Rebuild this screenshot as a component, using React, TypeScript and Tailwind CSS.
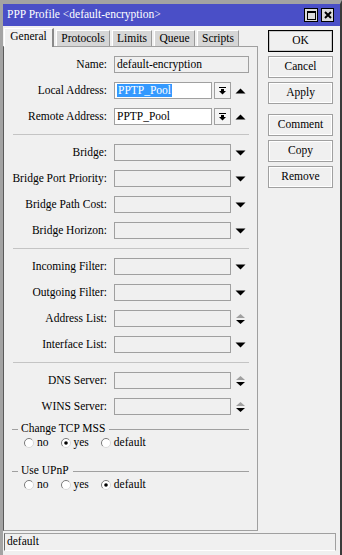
import type { ReactNode } from "react"

const FONT = { fontFamily: '"Liberation Serif", "Times New Roman", serif' }

function ComboIcon() {
  return (
    <svg width="7" height="8" viewBox="0 0 7 8">
      <rect x="0" y="0" width="7" height="1" fill="#000" />
      <rect x="2" y="2" width="3" height="2" fill="#000" />
      <polygon points="0,4 7,4 3.5,7.5" fill="#000" />
    </svg>
  )
}

function Up() {
  return (
    <svg width="11" height="6" viewBox="0 0 11 6">
      <polygon points="0.5,5.5 10.5,5.5 5.5,0.5" fill="#000" />
    </svg>
  )
}

function Down() {
  return (
    <svg width="11" height="6" viewBox="0 0 11 6">
      <polygon points="0.5,0.5 10.5,0.5 5.5,5.5" fill="#000" />
    </svg>
  )
}

function Spin() {
  return (
    <svg width="11" height="12" viewBox="0 0 11 12">
      <polygon points="1,5 10,5 5.5,1" fill="#a0a0a0" />
      <polygon points="1,7 10,7 5.5,11" fill="#000" />
    </svg>
  )
}

function Radio({ on, label }: { on?: boolean; label: string }) {
  return (
    <div className="flex items-center">
      <svg width="10" height="10" viewBox="0 0 10 10">
        <circle cx="5" cy="5" r="4.5" fill="#fff" />
        <path d="M1.8 8.2 A4.5 4.5 0 0 1 8.2 1.8" stroke="#7a7a7a" strokeWidth="1" fill="none" />
        <path d="M8.2 1.8 A4.5 4.5 0 0 1 1.8 8.2" stroke="#d8d8d8" strokeWidth="1" fill="none" />
        {on && <circle cx="5" cy="5" r="1.8" fill="#000" />}
      </svg>
      <span className="ml-[3px]">{label}</span>
    </div>
  )
}

function Row({ label, children }: { label: string; children: ReactNode }) {
  return (
    <div className="flex h-[17px] items-center">
      <div className="w-[103px] text-right leading-none">{label}</div>
      <div className="ml-[7px] flex h-full items-center">{children}</div>
    </div>
  )
}

function Combo({ value, selected }: { value: string; selected?: boolean }) {
  return (
    <>
      <div className="flex h-[17px] w-[98px] items-center border border-[#a0a0a0] bg-white pl-[2px]">
        <span className={selected ? "bg-[#3399ff] px-px leading-[13px] text-white" : "leading-none"}>{value}</span>
      </div>
      <div className="ml-[2px] flex h-[17px] w-[17px] items-center justify-center border border-[#a0a0a0] bg-[#f4f4f4]">
        <ComboIcon />
      </div>
      <div className="ml-[4px] flex w-[11px] items-center">
        <Up />
      </div>
    </>
  )
}

function Empty({ spin }: { spin?: boolean }) {
  return (
    <>
      <div className="h-[17px] w-[117px] border border-[#a0a0a0] bg-[#f0f0f0]" />
      <div className="ml-[4px] flex w-[11px] items-center">{spin ? <Spin /> : <Down />}</div>
    </>
  )
}

function Sep() {
  return <div className="ml-[9px] h-px w-[236px] bg-[#c4c4c4]" />
}

function Group({ title }: { title: string }) {
  return (
    <div className="flex h-[14px] items-center">
      <div className="ml-[8px] h-px w-[6px] bg-[#a0a0a0]" />
      <span className="ml-[3px] leading-none">{title}</span>
      <div className="ml-[4px] h-px flex-1 bg-[#a0a0a0] mr-[8px]" />
    </div>
  )
}

function Btn({ label, def }: { label: string; def?: boolean }) {
  return (
    <div
      className={
        "flex h-[22px] w-[65px] items-center justify-center bg-[#f0f0f0] " +
        (def ? "border border-black shadow-[inset_0_0_0_1px_#c8c8c8]" : "border border-[#a0a0a0] shadow-[inset_0_0_0_1px_#ffffff]")
      }
    >
      {label}
    </div>
  )
}

const TABS = [
  { name: "Protocols", w: "w-[54px]" },
  { name: "Limits", w: "w-[40px]" },
  { name: "Queue", w: "w-[41px]" },
  { name: "Scripts", w: "w-[42px]" },
]

export default function App() {
  return (
    <div
      className="flex h-[555px] w-[342px] flex-col border-l-[3px] border-r-2 border-t-4 border-[#a3a3a3] border-r-[#3a3a3a] bg-[#f0f0f0] text-[11.5px] text-black"
      style={FONT}
    >
      {/* Title bar */}
      <div className="flex h-[22px] shrink-0 items-center bg-[#4a4fc7] pl-[4px] pr-[6px] text-white">
        <span className="flex-1 leading-none">PPP Profile &lt;default-encryption&gt;</span>
        <div className="flex h-[14px] w-[14px] items-center justify-center border border-black bg-[#dcdcdc]">
          <svg width="9" height="9" viewBox="0 0 9 9">
            <rect x="0.5" y="0.5" width="8" height="8" fill="none" stroke="#000" />
            <rect x="0" y="0" width="9" height="2" fill="#000" />
          </svg>
        </div>
        <div className="ml-[3px] flex h-[14px] w-[13px] items-center justify-center border border-black bg-[#dcdcdc]">
          <svg width="8" height="8" viewBox="0 0 8 8">
            <path d="M1 1 L7 7 M7 1 L1 7" stroke="#000" strokeWidth="2" />
          </svg>
        </div>
      </div>

      {/* Main */}
      <div className="flex pt-[2px]">
        <div className="flex w-[255px] flex-col">
          <div className="flex h-[18px] items-end gap-[2px] pl-px">
            <div className="relative z-10 -mb-px flex h-[19px] w-[50px] items-center justify-center border-l border-t border-r-2 border-white border-r-[#8a8a8a] bg-[#f0f0f0] pb-[2px]">
              General
            </div>
            {TABS.map((t) => (
              <div
                key={t.name}
                className={t.w + " flex h-[16px] items-center justify-center border-l border-t border-r border-white border-r-[#9a9a9a] bg-[#d6d6d6]"}
              >
                {t.name}
              </div>
            ))}
          </div>

          <div className="flex h-[485px] flex-col border border-[#a0a0a0] border-l-[#5a5a5a] pt-[9px]">
            <div className="flex flex-col gap-[9px]">
              <Row label="Name:">
                <div className="flex h-[17px] w-[135px] items-center border border-[#a0a0a0] bg-[#f0f0f0] pl-[2px] leading-none">
                  default-encryption
                </div>
              </Row>
              <Row label="Local Address:">
                <Combo value="PPTP_Pool" selected />
              </Row>
              <Row label="Remote Address:">
                <Combo value="PPTP_Pool" />
              </Row>
              <Sep />
              <Row label="Bridge:">
                <Empty />
              </Row>
              <Row label="Bridge Port Priority:">
                <Empty />
              </Row>
              <Row label="Bridge Path Cost:">
                <Empty />
              </Row>
              <Row label="Bridge Horizon:">
                <Empty />
              </Row>
              <Sep />
              <Row label="Incoming Filter:">
                <Empty />
              </Row>
              <Row label="Outgoing Filter:">
                <Empty />
              </Row>
              <Row label="Address List:">
                <Empty spin />
              </Row>
              <Row label="Interface List:">
                <Empty />
              </Row>
              <Sep />
              <Row label="DNS Server:">
                <Empty spin />
              </Row>
              <Row label="WINS Server:">
                <Empty spin />
              </Row>
            </div>

            <div className="mt-[7px]">
              <Group title="Change TCP MSS" />
              <div className="flex h-[14px] items-center pl-[20px]">
                <Radio label="no" />
                <div className="ml-[12px]"><Radio on label="yes" /></div>
                <div className="ml-[12px]"><Radio label="default" /></div>
              </div>
            </div>
            <div className="mt-[14px]">
              <Group title="Use UPnP" />
              <div className="flex h-[14px] items-center pl-[20px]">
                <Radio label="no" />
                <div className="ml-[12px]"><Radio label="yes" /></div>
                <div className="ml-[12px]"><Radio on label="default" /></div>
              </div>
            </div>
          </div>
        </div>

        {/* Buttons */}
        <div className="ml-[10px] flex flex-col gap-[4px] pt-[2px]">
          <Btn label="OK" def />
          <Btn label="Cancel" />
          <Btn label="Apply" />
          <div className="mt-[6px] flex flex-col gap-[4px]">
            <Btn label="Comment" />
            <Btn label="Copy" />
            <Btn label="Remove" />
          </div>
        </div>
      </div>

      {/* Status bar */}
      <div className="ml-px mt-[2px] flex h-[18px] w-[332px] items-center border border-[#a0a0a0] border-b-white border-l-[#6a6a6a] pl-[2px] leading-none">
        default
      </div>
    </div>
  )
}
